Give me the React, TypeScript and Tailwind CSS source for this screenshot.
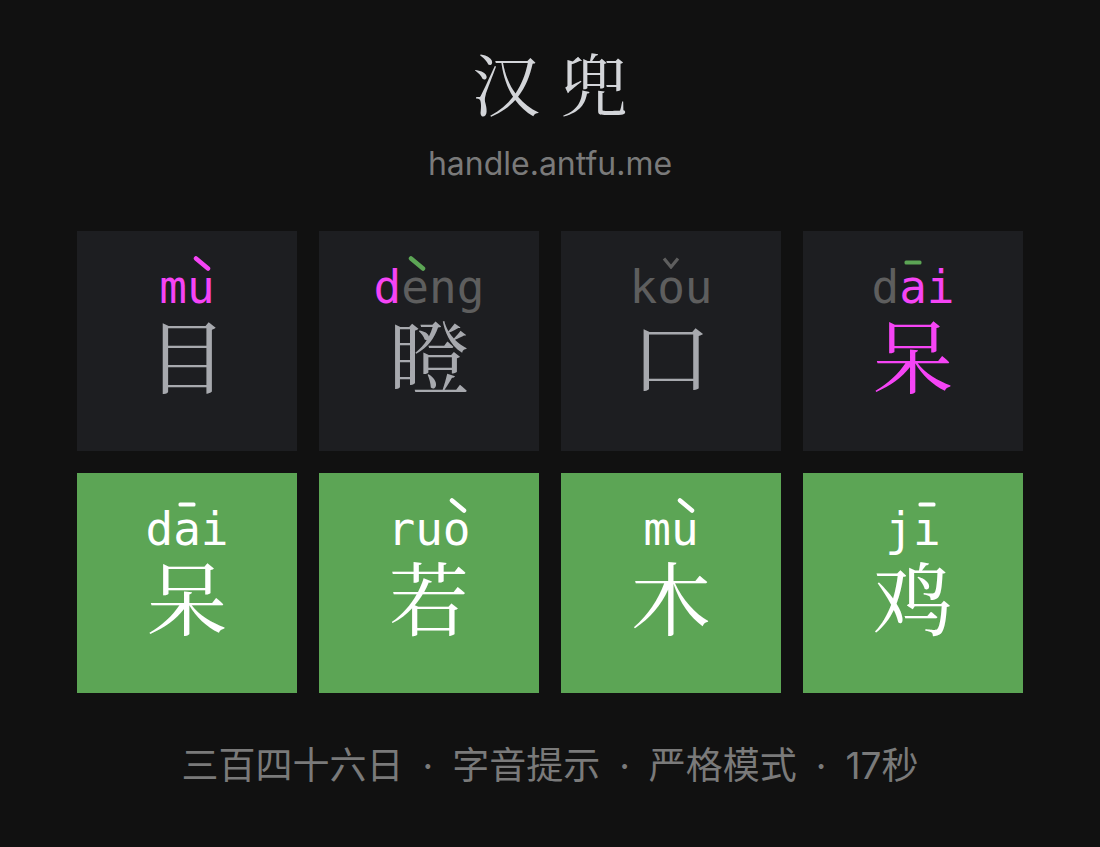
import type { ReactNode } from "react";

type Part = { ch: string; color: string; tone?: 1 | 2 | 3 | 4; toneColor?: string };
type Tile = { parts: Part[]; char: string; charColor: string; green?: boolean };

const MAG = "#f544f5";
const GRN = "#5ca555";
const GRAY = "#5e5e5e";
const CHAR = "#a7a9ae";
const W = "#ffffff";

const rows: Tile[][] = [
  [
    {
      parts: [
        { ch: "m", color: MAG },
        { ch: "u", color: MAG, tone: 4, toneColor: MAG },
      ],
      char: "目",
      charColor: CHAR,
    },
    {
      parts: [
        { ch: "d", color: MAG },
        { ch: "e", color: GRAY, tone: 4, toneColor: GRN },
        { ch: "n", color: GRAY },
        { ch: "g", color: GRAY },
      ],
      char: "瞪",
      charColor: CHAR,
    },
    {
      parts: [
        { ch: "k", color: GRAY },
        { ch: "o", color: GRAY, tone: 3, toneColor: GRAY },
        { ch: "u", color: GRAY },
      ],
      char: "口",
      charColor: CHAR,
    },
    {
      parts: [
        { ch: "d", color: GRAY },
        { ch: "a", color: MAG, tone: 1, toneColor: GRN },
        { ch: "i", color: MAG },
      ],
      char: "呆",
      charColor: MAG,
    },
  ],
  [
    {
      parts: [
        { ch: "d", color: W },
        { ch: "a", color: W, tone: 1, toneColor: W },
        { ch: "i", color: W },
      ],
      char: "呆",
      charColor: W,
      green: true,
    },
    {
      parts: [
        { ch: "r", color: W },
        { ch: "u", color: W },
        { ch: "o", color: W, tone: 4, toneColor: W },
      ],
      char: "若",
      charColor: W,
      green: true,
    },
    {
      parts: [
        { ch: "m", color: W },
        { ch: "u", color: W, tone: 4, toneColor: W },
      ],
      char: "木",
      charColor: W,
      green: true,
    },
    {
      parts: [
        { ch: "j", color: W },
        { ch: "ı", color: W, tone: 1, toneColor: W },
      ],
      char: "鸡",
      charColor: W,
      green: true,
    },
  ],
];

function ToneMark({ tone, color }: { tone: number; color: string }) {
  if (tone === 1) {
    return (
      <svg
        className="absolute left-1/2 top-[-4px] -translate-x-1/2"
        width="18"
        height="5"
        viewBox="0 0 18 5"
      >
        <rect x="0.5" y="0.5" width="17" height="4" rx="1.5" fill={color} />
      </svg>
    );
  }
  if (tone === 3) {
    return (
      <svg
        className="absolute left-1/2 top-[-7px] -translate-x-1/2"
        width="18"
        height="12"
        viewBox="0 0 18 12"
      >
        <path d="M2 1.5 L9 10 L16 1.5" stroke={color} strokeWidth="3.2" fill="none" />
      </svg>
    );
  }
  if (tone === 2) {
    return (
      <svg
        className="absolute left-1/2 top-[-8px] -translate-x-1/2"
        width="18"
        height="15"
        viewBox="0 0 18 15"
      >
        <path d="M15 2 L3 13" stroke={color} strokeWidth="4.5" strokeLinecap="round" />
      </svg>
    );
  }
  return (
    <svg
      className="absolute left-[55%] top-[-8px] -translate-x-1/2"
      width="18"
      height="15"
      viewBox="0 0 18 15"
    >
      <path d="M3 2.5 L15 12.5" stroke={color} strokeWidth="4.5" strokeLinecap="round" />
    </svg>
  );
}

function TileBox({ t }: { t: Tile }) {
  return (
    <div
      className={
        "flex h-[220px] w-[220px] flex-col items-center pt-[33px] " +
        (t.green ? "bg-[#5ca555]" : "bg-[#1d1e21]")
      }
    >
      <div className="flex h-[46px] font-['DejaVu_Sans_Mono',monospace] text-[46px] leading-none">
        {t.parts.map((p, i) => (
          <span key={i} className="relative inline-block" style={{ color: p.color }}>
            {p.ch}
            {p.tone ? <ToneMark tone={p.tone} color={p.toneColor || p.color} /> : null}
          </span>
        ))}
      </div>
      <div
        className="mt-[3px] font-['Noto_Serif_CJK_SC','Noto_Sans_CJK_SC',serif] text-[80px] leading-none"
        style={{ color: t.charColor }}
      >
        {t.char}
      </div>
    </div>
  );
}

function Dot() {
  return <span className="px-[19px]">·</span>;
}

export default function App(): ReactNode {
  return (
    <div className="flex min-h-[847px] w-full flex-col items-center bg-[#111111]">
      <div className="mt-[48px] pl-[20px] font-['Noto_Serif_CJK_SC','Noto_Sans_CJK_SC',serif] text-[68px] leading-none tracking-[20px] text-[#d3d5d9]">
        汉兜
      </div>
      <div className="mt-[32px] font-['Inter','Noto_Sans',sans-serif] text-[32px] leading-none text-[#7a7a7a]">
        handle.antfu.me
      </div>

      <div className="mt-[51px] flex flex-col gap-[22px]">
        {rows.map((r, ri) => (
          <div key={ri} className="flex gap-[22px]">
            {r.map((t, i) => (
              <TileBox key={i} t={t} />
            ))}
          </div>
        ))}
      </div>

      <div className="mt-[54px] flex font-['Inter','Noto_Sans_CJK_SC',sans-serif] text-[37px] leading-none text-[#7a7a7a]">
        <span>三百四十六日</span>
        <Dot />
        <span>字音提示</span>
        <Dot />
        <span>严格模式</span>
        <Dot />
        <span>17秒</span>
      </div>
    </div>
  );
}
